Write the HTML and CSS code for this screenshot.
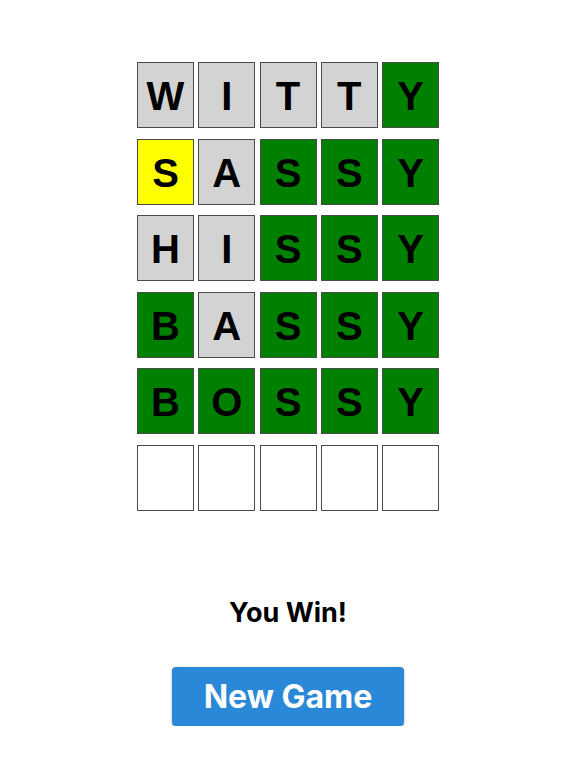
FILE: index.html
```html
<!DOCTYPE html>
<html>
  <head>
    <title>Wordle</title>
    <link rel="stylesheet" href="styles.css">
  </head>
  <body>
    <div class="board">
      <div class="tile gray">W</div>
      <div class="tile gray">I</div>
      <div class="tile gray">T</div>
      <div class="tile gray">T</div>
      <div class="tile green">Y</div>

      <div class="tile yellow">S</div>
      <div class="tile gray">A</div>
      <div class="tile green">S</div>
      <div class="tile green">S</div>
      <div class="tile green">Y</div>

      <div class="tile gray">H</div>
      <div class="tile gray">I</div>
      <div class="tile green">S</div>
      <div class="tile green">S</div>
      <div class="tile green">Y</div>

      <div class="tile green">B</div>
      <div class="tile gray">A</div>
      <div class="tile green">S</div>
      <div class="tile green">S</div>
      <div class="tile green">Y</div>

      <div class="tile green">B</div>
      <div class="tile green">O</div>
      <div class="tile green">S</div>
      <div class="tile green">S</div>
      <div class="tile green">Y</div>

      <div class="tile"></div>
      <div class="tile"></div>
      <div class="tile"></div>
      <div class="tile"></div>
      <div class="tile"></div>
    </div>

    <div class="message">You Win!</div>

    <div class="actions">
      <button class="new-game">New Game</button>
    </div>
  </body>
</html>
```

FILE: styles.css
```css
body {
  margin: 0;
  background-color: #ffffff;
  font-family: "Liberation Sans", Arial, sans-serif;
}

.board {
  margin: 62px auto 0;
  width: 302px;
  display: grid;
  grid-template-columns: repeat(5, 57px);
  grid-auto-rows: 66px;
  column-gap: 4.25px;
  row-gap: 10.6px;
}

.tile {
  box-sizing: border-box;
  border: 1.5px solid #4a4a4a;
  background-color: #ffffff;
  display: flex;
  align-items: center;
  justify-content: center;
  padding-top: 3px;
  font-size: 40px;
  font-weight: bold;
  color: #000000;
}

.gray {
  background-color: #d3d3d3;
}

.green {
  background-color: #008000;
}

.yellow {
  background-color: #ffff00;
}

.message {
  margin-top: 86px;
  text-align: center;
  font-family: Inter, "Liberation Sans", sans-serif;
  font-size: 27px;
  line-height: 32px;
  font-weight: bold;
  color: #000000;
}

.actions {
  margin-top: 38px;
  display: flex;
  justify-content: center;
}

.new-game {
  width: 232px;
  height: 59px;
  border: none;
  border-radius: 4px;
  background-color: #2a88d8;
  box-shadow: 0 1px 3px rgba(0, 0, 0, 0.3);
  color: #ffffff;
  font-family: Inter, "Liberation Sans", sans-serif;
  font-size: 32px;
  font-weight: bold;
  cursor: pointer;
}
```
